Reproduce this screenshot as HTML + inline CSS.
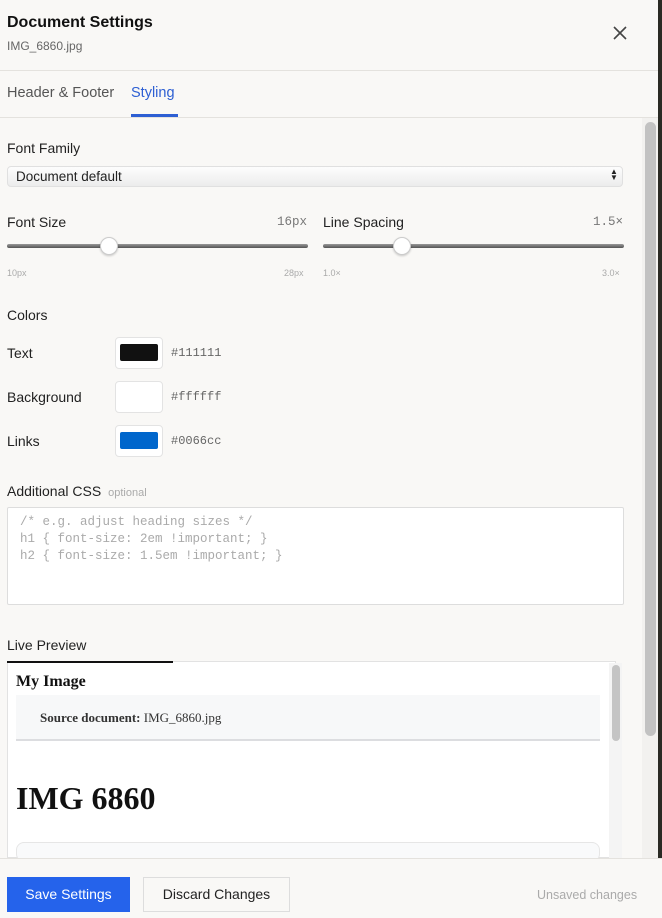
<!DOCTYPE html>
<html><head><style>
*{box-sizing:border-box;margin:0;padding:0}
body{width:662px;height:918px;background:#f9f8f6;font-family:"Liberation Sans",sans-serif;color:#1a1a1a;position:relative;overflow:hidden}
.a{position:absolute}
.mono{font-family:"Liberation Mono",monospace}
.lbl{font-size:14px;color:#222}
.sm{font-size:9px;color:#aaa}
.track{height:4px;background:linear-gradient(#999,#555);border-radius:2px}
.thumb{width:18px;height:18px;border-radius:50%;background:#fff;border:1px solid #ccc;box-shadow:0 1px 2px rgba(0,0,0,.2)}
.sw{width:48px;height:32px;background:#fff;border:1px solid #e3e3e3;border-radius:4px}
.sw i{position:absolute;left:4px;top:6px;width:38px;height:17px;border-radius:2px}
</style></head><body>
<div class="a" style="right:0;top:0;width:4px;height:918px;background:#2a2a24"></div>
<div class="a" style="left:7px;top:14px;font-size:16px;font-weight:bold;color:#111">Document Settings</div>
<div class="a" style="left:7px;top:39px;font-size:12px;color:#666">IMG_6860.jpg</div>
<svg class="a" style="left:613px;top:26px" width="14" height="14" viewBox="0 0 14 14"><path d="M1 1L13 13M13 1L1 13" stroke="#444" stroke-width="1.6"/></svg>
<div class="a" style="left:0;top:70px;width:658px;height:1px;background:#e4e2de"></div>
<div class="a" style="left:7px;top:85px;font-size:14.5px;color:#555">Header &amp; Footer</div>
<div class="a" style="left:131px;top:85px;font-size:14.5px;color:#2d5fd3">Styling</div>
<div class="a" style="left:131px;top:114px;width:47px;height:3px;background:#2d5fd3"></div>
<div class="a" style="left:0;top:117px;width:658px;height:1px;background:#e4e2de"></div>
<div class="a" style="left:642px;top:118px;width:16px;height:740px;background:#f2f1ef"></div>
<div class="a" style="left:645px;top:122px;width:11px;height:614px;background:#c2c2c2;border-radius:6px"></div>

<div class="a lbl" style="left:7px;top:140px">Font Family</div>
<div class="a" style="left:7px;top:166px;width:616px;height:21px;border-radius:4px;background:linear-gradient(#fdfdfd,#ececec);border:1px solid #e0e0e0"></div>
<div class="a" style="left:16px;top:169px;font-size:13.5px;color:#222">Document default</div>
<div class="a" style="left:610px;top:169px;font-size:8px;line-height:6px;color:#222">▲<br>▼</div>

<div class="a lbl" style="left:7px;top:214px">Font Size</div>
<div class="a mono" style="left:277px;top:215px;font-size:12.5px;color:#777">16px</div>
<div class="a track" style="left:7px;top:244px;width:301px"></div>
<div class="a thumb" style="left:100px;top:237px"></div>
<div class="a sm" style="left:7px;top:268px">10px</div>
<div class="a sm" style="left:284px;top:268px">28px</div>
<div class="a lbl" style="left:323px;top:214px">Line Spacing</div>
<div class="a mono" style="left:593px;top:215px;font-size:12.5px;color:#777">1.5×</div>
<div class="a track" style="left:323px;top:244px;width:301px"></div>
<div class="a thumb" style="left:393px;top:237px"></div>
<div class="a sm" style="left:323px;top:268px">1.0×</div>
<div class="a sm" style="left:602px;top:268px">3.0×</div>

<div class="a lbl" style="left:7px;top:307px">Colors</div>
<div class="a lbl" style="left:7px;top:345px">Text</div>
<div class="a sw" style="left:115px;top:337px"><i style="background:#111"></i></div>
<div class="a mono" style="left:171px;top:346px;font-size:12px;color:#666">#111111</div>
<div class="a lbl" style="left:7px;top:389px">Background</div>
<div class="a sw" style="left:115px;top:381px"></div>
<div class="a mono" style="left:171px;top:390px;font-size:12px;color:#666">#ffffff</div>
<div class="a lbl" style="left:7px;top:433px">Links</div>
<div class="a sw" style="left:115px;top:425px"><i style="background:#0066cc"></i></div>
<div class="a mono" style="left:171px;top:434px;font-size:12px;color:#666">#0066cc</div>

<div class="a lbl" style="left:7px;top:483px">Additional CSS <span style="font-size:11px;color:#aaa">&nbsp;optional</span></div>
<div class="a" style="left:7px;top:507px;width:617px;height:98px;background:#fff;border:1px solid #ddd;border-radius:2px"></div>
<div class="a mono" style="left:20px;top:514px;font-size:12.5px;line-height:17px;color:#aaa;white-space:pre">/* e.g. adjust heading sizes */
h1 { font-size: 2em !important; }
h2 { font-size: 1.5em !important; }</div>

<div class="a lbl" style="left:7px;top:637px">Live Preview</div>
<div class="a" style="left:7px;top:661px;width:609px;height:197px;background:#fff;border:1px solid #e2e2e2"></div>
<div class="a" style="left:7px;top:661px;width:166px;height:2px;background:#111"></div>
<div class="a" style="left:609px;top:663px;width:13px;height:195px;background:#f4f4f4"></div>
<div class="a" style="left:612px;top:665px;width:8px;height:76px;background:#c4c4c4;border-radius:4px"></div>
<div class="a" style="left:16px;top:673px;font-family:'Liberation Serif',serif;font-weight:bold;font-size:16px;color:#111">My Image</div>
<div class="a" style="left:16px;top:695px;width:584px;height:46px;background:#f7f8f9;border-bottom:2px solid #dcdde0"></div>
<div class="a" style="left:40px;top:710px;font-family:'Liberation Serif',serif;font-size:13px;color:#333"><b>Source document:</b> IMG_6860.jpg</div>
<div class="a" style="left:16px;top:780px;font-family:'Liberation Serif',serif;font-weight:bold;font-size:32px;color:#111">IMG 6860</div>
<div class="a" style="left:16px;top:842px;width:584px;height:20px;background:#f9fafb;border:1px solid #e6e6e6;border-radius:8px"></div>

<div class="a" style="left:0;top:858px;width:662px;height:60px;background:#f9f8f6;border-top:1px solid #e4e2de"></div>
<div class="a" style="left:7px;top:877px;width:123px;height:35px;background:#2563eb;color:#fff;font-size:14px;text-align:center;line-height:35px">Save Settings</div>
<div class="a" style="left:143px;top:877px;width:147px;height:35px;background:#f9f8f6;border:1px solid #ddd;color:#222;font-size:14px;text-align:center;line-height:33px">Discard Changes</div>
<div class="a" style="left:537px;top:888px;font-size:12.5px;color:#aaa">Unsaved changes</div>
</body></html>
